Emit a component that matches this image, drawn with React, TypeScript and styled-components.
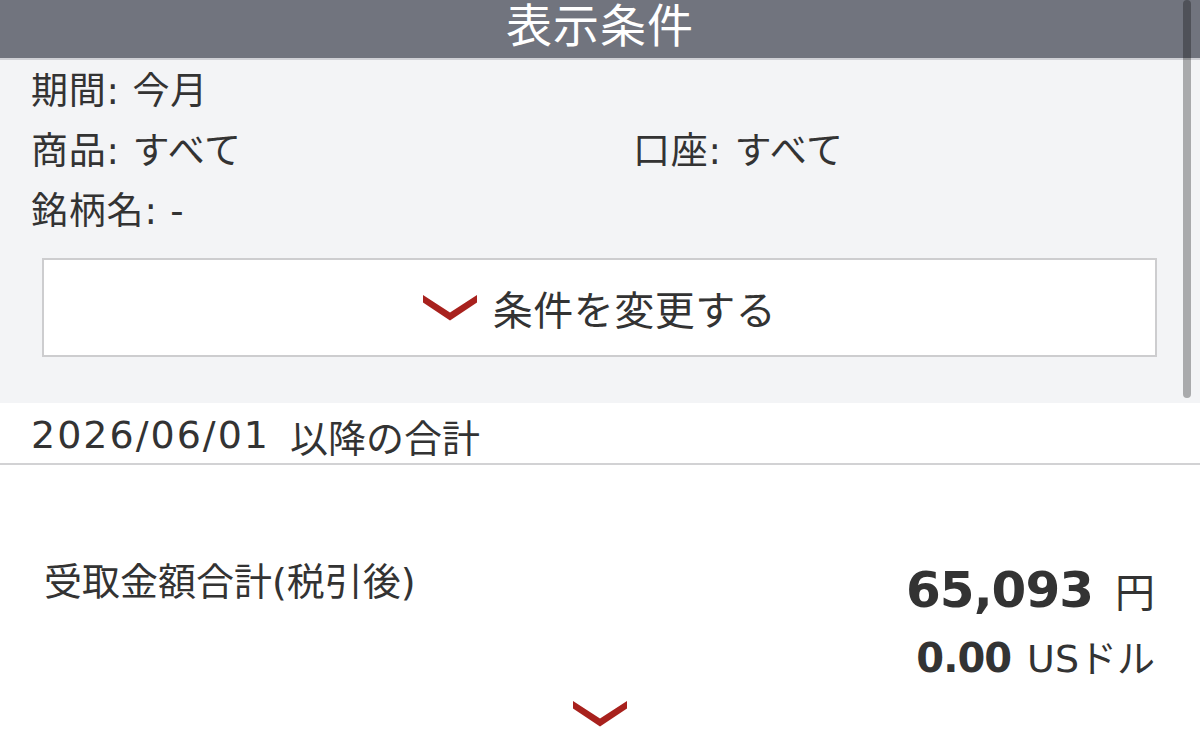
import * as React from "react";
import styled, { createGlobalStyle } from "styled-components";

const GlobalStyle = createGlobalStyle`
    body {
        margin: 0;
        background: #ffffff;
        font-family: "DejaVu Sans", "Noto Sans CJK JP", sans-serif;
        color: #333333;
    }
`;

const Page = styled.div`
    position: relative;
    width: 1200px;
    height: 756px;
    overflow: hidden;
    background: #ffffff;
`;

const Header = styled.div`
    height: 52px;
    padding-bottom: 6px;
    background: #71747e;
    border-bottom: 2px solid #cfd0d5;
    display: flex;
    align-items: center;
    justify-content: center;
`;

const Title = styled.h1`
    margin: 0;
    font-size: 46px;
    font-weight: 400;
    line-height: 1;
    letter-spacing: 1px;
    color: #ffffff;
`;

const Conditions = styled.section`
    background: #f3f4f6;
    padding: 2px 0 46px;
`;

const CondGrid = styled.div`
    display: grid;
    grid-template-columns: 602px 1fr;
    padding-left: 31px;
`;

const CondItem = styled.div<{ $full?: boolean }>`
    grid-column: ${p => (p.$full ? "1 / -1" : "auto")};
    font-size: 37px;
    letter-spacing: 0.8px;
    line-height: 60px;
    color: #333333;
    white-space: nowrap;
`;

const ButtonWrap = styled.div`
    padding: 0 43px 0 42px;
    margin-top: 16px;
`;

const ChangeButton = styled.button`
    width: 100%;
    height: 99px;
    box-sizing: border-box;
    border: 2px solid #cdcdcf;
    background: #ffffff;
    display: flex;
    align-items: center;
    justify-content: center;
    gap: 16px;
    font-family: inherit;
    font-size: 40px;
    letter-spacing: 0.5px;
    color: #333333;
    padding: 0;
    cursor: pointer;
`;

const DateRow = styled.div`
    height: 62px;
    box-sizing: border-box;
    padding: 4px 0 0 31px;
    display: flex;
    align-items: center;
    border-bottom: 2px solid #d2d2d4;
    font-size: 38px;
    color: #333333;
`;

const DateText = styled.span`
    letter-spacing: 2px;
    margin-right: 20px;
`;

const Summary = styled.section`
    padding: 93px 45px 0 44px;
    display: flex;
    flex-direction: column;
    align-items: center;
`;

const SummaryRow = styled.div`
    width: 100%;
    display: flex;
    justify-content: space-between;
    align-items: flex-start;
`;

const Label = styled.div`
    margin-top: 2px;
    font-size: 38px;
    line-height: 44px;
    color: #333333;
`;

const Amounts = styled.div`
    display: flex;
    flex-direction: column;
    align-items: flex-end;
    gap: 5px;
    padding-top: 2px;
`;

const AmountLine = styled.div`
    display: flex;
    align-items: baseline;
    line-height: 60px;
    white-space: nowrap;
`;

const Value = styled.span<{ $size: number; $gap: number }>`
    font-size: ${p => p.$size}px;
    font-weight: 700;
    letter-spacing: -1px;
    margin-right: ${p => p.$gap}px;
    color: #333333;
`;

const Unit = styled.span<{ $size: number }>`
    font-size: ${p => p.$size}px;
    color: #333333;
`;

const MoreToggle = styled.div`
    margin-top: 12px;
    display: flex;
    justify-content: center;
`;

const ScrollThumb = styled.div`
    position: absolute;
    top: 0;
    right: 9px;
    width: 8px;
    height: 398px;
    border-radius: 4px;
    background: rgba(0, 0, 0, 0.3);
`;

const Chevron: React.FC = () => (
    <svg width="54" height="26" viewBox="0 0 54 26">
        <polygon points="0,0 27,17.5 54,0 54,7.5 27,25.5 0,7.5" fill="#a8211d" />
    </svg>
);

export default function App() {
    return <>
        <GlobalStyle />
        <Page>
            <Header>
                <Title>表示条件</Title>
            </Header>
            <Conditions>
                <CondGrid>
                    <CondItem $full>期間: 今月</CondItem>
                    <CondItem>商品: すべて</CondItem>
                    <CondItem>口座: すべて</CondItem>
                    <CondItem $full>銘柄名: -</CondItem>
                </CondGrid>
                <ButtonWrap>
                    <ChangeButton type="button">
                        <Chevron />
                        条件を変更する
                    </ChangeButton>
                </ButtonWrap>
            </Conditions>
            <DateRow>
                <DateText>2026/06/01</DateText>以降の合計
            </DateRow>
            <Summary>
                <SummaryRow>
                    <Label>受取金額合計(税引後)</Label>
                    <Amounts>
                        <AmountLine>
                            <Value $size={50} $gap={22}>65,093</Value>
                            <Unit $size={40}>円</Unit>
                        </AmountLine>
                        <AmountLine>
                            <Value $size={40} $gap={16}>0.00</Value>
                            <Unit $size={38}>USドル</Unit>
                        </AmountLine>
                    </Amounts>
                </SummaryRow>
                <MoreToggle>
                    <Chevron />
                </MoreToggle>
            </Summary>
            <ScrollThumb />
        </Page>
    </>;
}
